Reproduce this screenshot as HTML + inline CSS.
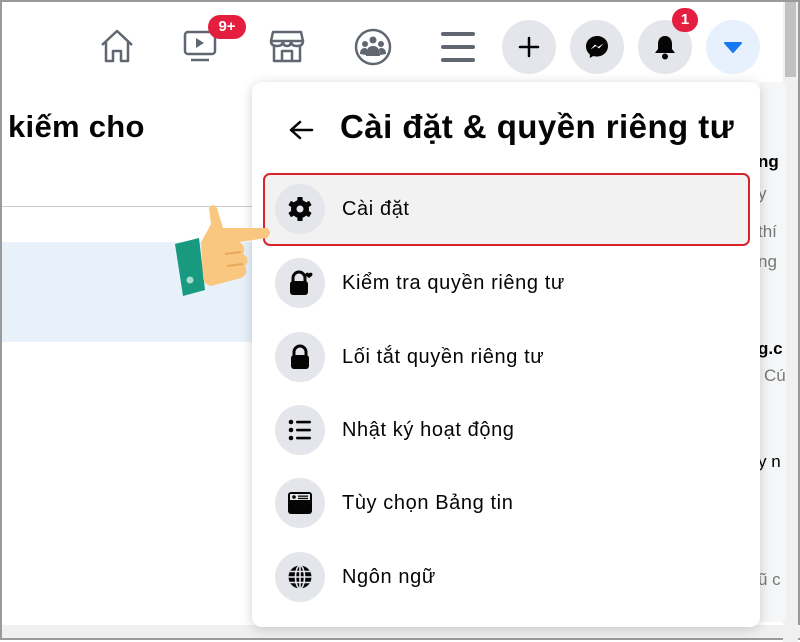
<!DOCTYPE html>
<html><head><meta charset="utf-8"><style>
*{margin:0;padding:0;box-sizing:border-box}
body{width:800px;height:640px;overflow:hidden;background:#fff;font-family:"Liberation Sans","DejaVu Sans",sans-serif;position:relative;border:2px solid #9a9a9a}
.a{position:absolute}
.cb{position:absolute;top:18px;width:54px;height:54px;border-radius:50%;background:#e4e6eb;display:flex;align-items:center;justify-content:center}
.menu{left:250px;top:80px;width:508px;height:545px;background:#fff;border-radius:10px;box-shadow:0 2px 12px rgba(0,0,0,.18)}
.ic{position:absolute;left:23px;width:50px;height:50px;border-radius:50%;background:#e4e6eb;display:flex;align-items:center;justify-content:center}
.tx{position:absolute;left:90px;font-size:20px;color:#050505;letter-spacing:0.6px}
.bd{position:absolute;background:#e41e3f;color:#fff;font-weight:bold;border-radius:12px;font-size:15px;text-align:center;line-height:24px;height:24px}
.r{position:absolute;font-size:17px;left:756px}
</style></head><body>
<div class="a" style="right:0;top:0;width:15px;height:640px;background:#f0f0f0"></div>
<div class="a" style="right:2px;top:0;width:11px;height:75px;background:#c1c1c1"></div>
<div class="a" style="left:0;bottom:0;width:800px;height:13px;background:#f0f0f0"></div>
<div class="a" style="left:6px;top:107px;font-size:31px;font-weight:bold;color:#050505;letter-spacing:0.3px">kiếm cho</div>
<div class="a" style="left:0;top:204px;width:250px;height:1px;background:#ccc"></div>
<div class="a" style="left:0;top:240px;width:250px;height:100px;background:#e8f0fa"></div>
<div class="a" style="left:758px;top:80px;width:26px;height:540px;background:#f5f6f7"></div>
<div class="r" style="top:150px;font-weight:bold">ng</div>
<div class="r" style="top:182px;color:#777">y</div>
<div class="r" style="top:220px;color:#777">thí</div>
<div class="r" style="top:250px;color:#777">ng</div>
<div class="r" style="top:337px;font-weight:bold">g.c</div>
<div class="r" style="top:364px;color:#777;left:762px">Cú</div>
<div class="r" style="top:450px">y n</div>
<div class="r" style="top:568px;color:#777">ũ c</div>
<svg class="a" style="left:96px;top:26px" width="38" height="36" viewBox="0 0 38 36"><path d="M4 17 L19 3 L34 17 M8 14 V33 H15 V23 H23 V33 H30 V14" fill="none" stroke="#606770" stroke-width="2.5" stroke-linejoin="round"/></svg>
<svg class="a" style="left:180px;top:27px" width="36" height="34" viewBox="0 0 36 34"><rect x="3" y="3" width="30" height="22" rx="3" fill="none" stroke="#606770" stroke-width="2.5"/><path d="M14 9 L22 14 L14 19Z" fill="#606770"/><path d="M9 31 H27" stroke="#606770" stroke-width="2.5"/></svg>
<div class="bd" style="left:206px;top:13px;width:38px">9+</div>
<svg class="a" style="left:266px;top:26px" width="38" height="36" viewBox="0 0 38 36"><path d="M5 4 H33 L35 13 H3Z M3 13 Q3 18 9 18 Q15 18 15 13 Q15 18 19 18 Q23 18 23 13 Q23 18 29 18 Q35 18 35 13 M6 18 V33 H32 V18 M14 33 V23 H24 V33" fill="none" stroke="#606770" stroke-width="2.5" stroke-linejoin="round"/></svg>
<svg class="a" style="left:351px;top:25px" width="40" height="40" viewBox="0 0 40 40"><circle cx="20" cy="20" r="17" fill="none" stroke="#606770" stroke-width="2.5"/><circle cx="20" cy="13" r="3.5" fill="#606770"/><circle cx="12" cy="17" r="3" fill="#606770"/><circle cx="28" cy="17" r="3" fill="#606770"/><path d="M13 29 Q13 19 20 19 Q27 19 27 29Z M7 27 Q7 21 12 21 Q14 21 14 23 L13 28Z M33 27 Q33 21 28 21 Q26 21 26 23 L27 28Z" fill="#606770"/></svg>
<svg class="a" style="left:438px;top:28px" width="36" height="34" viewBox="0 0 36 34"><path d="M3 4 H33 M3 17 H33 M3 30 H33" stroke="#606770" stroke-width="4" stroke-linecap="round"/></svg>
<div class="cb" style="left:500px"><svg width="24" height="24"><path d="M12 3V21M3 12H21" stroke="#050505" stroke-width="2.5" stroke-linecap="round"/></svg></div>
<div class="cb" style="left:568px"><svg width="28" height="28" viewBox="0 0 28 28"><path d="M14 3C8 3 3 7.5 3 13.5c0 3.2 1.4 6 3.8 7.8V25l3.5-2c1.2.4 2.4.5 3.700.5 6 0 11-4.5 11-10.5S20 3 14 3z" fill="#050505"/><path d="M7.5 16.5 L12 11.5 L15 14 L20.5 10.5 L16 15.5 L13 13Z" fill="#fff"/></svg></div>
<div class="cb" style="left:636px"><svg width="26" height="28" viewBox="0 0 26 28"><path d="M13 3C8 3 6 7 6 11V16L3 20H23L20 16V11C20 7 18 3 13 3Z" fill="#050505"/><circle cx="13" cy="23.5" r="3" fill="#050505"/></svg></div>
<div class="bd" style="left:670px;top:6px;width:26px">1</div>
<div class="cb" style="left:704px;background:#e7f0fd"><svg width="20" height="14"><path d="M2 3 H18 L10 12Z" fill="#1877f2" stroke="#1877f2" stroke-linejoin="round" stroke-width="2"/></svg></div>
<div class="a menu">
 <svg class="a" style="left:36px;top:37px" width="26" height="22"><path d="M24 11H4M12 3 L3 11 L12 19" fill="none" stroke="#050505" stroke-width="2.5" stroke-linecap="round" stroke-linejoin="round"/></svg>
 <div class="a" style="left:88px;top:26px;font-size:33px;font-weight:bold;color:#050505;white-space:nowrap;letter-spacing:0.45px">Cài đặt &amp; quyền riêng tư</div>
 <div class="a" style="left:11px;top:91px;width:487px;height:73px;background:#f2f2f2;border:2px solid #d8232a;border-radius:7px"></div>
 <div class="ic" style="top:102px"><svg width="26" height="26" viewBox="0 0 26 26"><g fill="#050505" transform="translate(13 13)"><circle r="9"/><rect x="-2.6" y="-12" width="5.2" height="24" rx="0.8"/><rect x="-2.6" y="-12" width="5.2" height="24" rx="0.8" transform="rotate(60)"/><rect x="-2.6" y="-12" width="5.2" height="24" rx="0.8" transform="rotate(120)"/></g><circle cx="13" cy="13" r="3.5" fill="#e4e6eb"/></svg></div>
 <div class="tx" style="top:116px">Cài đặt</div>
 <div class="ic" style="top:176px"><svg width="28" height="28" viewBox="0 0 28 28"><path d="M7 13V9a6 6 0 0 1 12 0v4" fill="none" stroke="#050505" stroke-width="3"/><rect x="4" y="12" width="18" height="14" rx="3" fill="#050505"/><path d="M23 4.5c1-1.5 3.5-1 3.5.8 0 1.5-2 2.8-3.5 3.8-1.5-1-3.5-2.300-3.5-3.8 0-1.8 2.5-2.3 3.5-.8z" fill="#050505"/></svg></div>
 <div class="tx" style="top:190px">Kiểm tra quyền riêng tư</div>
 <div class="ic" style="top:250px"><svg width="24" height="28" viewBox="0 0 24 28"><path d="M6 13V9a6 6 0 0 1 12 0v4" fill="none" stroke="#050505" stroke-width="3"/><rect x="3" y="12" width="18" height="14" rx="3" fill="#050505"/></svg></div>
 <div class="tx" style="top:264px">Lối tắt quyền riêng tư</div>
 <div class="ic" style="top:323px"><svg width="26" height="24" viewBox="0 0 26 24"><g fill="#050505"><circle cx="4" cy="4" r="2.3"/><circle cx="4" cy="12" r="2.3"/><circle cx="4" cy="20" r="2.3"/><rect x="9" y="2.8" width="15" height="2.6" rx="1.2"/><rect x="9" y="10.8" width="15" height="2.6" rx="1.2"/><rect x="9" y="18.8" width="15" height="2.6" rx="1.2"/></g></svg></div>
 <div class="tx" style="top:337px">Nhật ký hoạt động</div>
 <div class="ic" style="top:396px"><svg width="26" height="24" viewBox="0 0 26 24"><rect x="1" y="1" width="24" height="22" rx="3" fill="#050505"/><rect x="3" y="3" width="20" height="6" fill="#e4e6eb"/><circle cx="7" cy="6" r="1.8" fill="#050505"/><rect x="11" y="4.5" width="10" height="1.3" fill="#050505"/><rect x="11" y="6.8" width="10" height="1.3" fill="#050505"/></svg></div>
 <div class="tx" style="top:410px">Tùy chọn Bảng tin</div>
 <div class="ic" style="top:470px"><svg width="26" height="26" viewBox="0 0 26 26"><circle cx="13" cy="13" r="11.5" fill="#050505"/><g stroke="#e4e6eb" stroke-width="1.6" fill="none"><ellipse cx="13" cy="13" rx="4.5" ry="11.5"/><path d="M13 1.5V24.5M1.5 13H24.5M3 7.5H23M3 18.5H23"/></g></svg></div>
 <div class="tx" style="top:484px">Ngôn ngữ</div>
</div>
<svg class="a" style="left:165px;top:200px" width="110" height="96" viewBox="0 0 110 96"><path d="M8 42 L32 36 L38 88 L16 94Z" fill="#179a80"/><circle cx="23" cy="78" r="3.5" fill="#a9dccf"/><path d="M34 40 Q40 30 44 22 L42 6 Q46 0 50 6 L56 26 Q80 26 100 26 Q106 30 100 36 L72 40 Q80 44 76 52 Q84 56 78 64 Q82 72 74 76 L44 84 Q36 82 36 74Z" fill="#f9c77f"/><path d="M58 52 L74 50 M60 64 L76 62" stroke="#e8a85a" stroke-width="2" fill="none"/></svg>
</body></html>
